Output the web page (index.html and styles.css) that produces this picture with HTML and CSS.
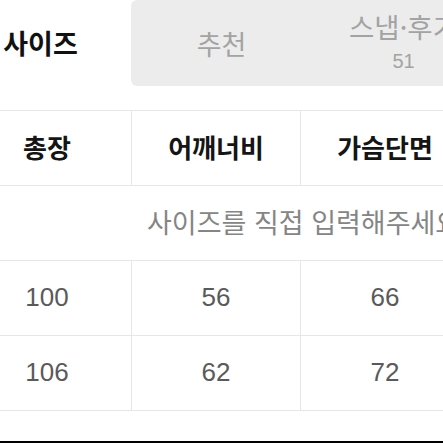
FILE: index.html
```html
<!DOCTYPE html>
<html lang="ko">
<head>
<meta charset="utf-8">
<link rel="stylesheet" href="styles.css">
</head>
<body>
<div class="page">
  <div class="tabs">
    <div class="tab tab-active">사이즈</div>
    <div class="tab-group">
      <div class="tab">추천</div>
      <div class="tab tab-stack">
        <span class="tab-label">스냅·후기</span>
        <span class="tab-count">51</span>
      </div>
    </div>
  </div>
  <div class="table">
    <div class="row row-head">
      <div class="cell">총장</div>
      <div class="cell">어깨너비</div>
      <div class="cell">가슴단면</div>
      <div class="cell">소매길이</div>
    </div>
    <div class="row row-msg">
      <div class="msg">사이즈를 직접 입력해주세요</div>
    </div>
    <div class="row">
      <div class="cell">100</div>
      <div class="cell">56</div>
      <div class="cell">66</div>
      <div class="cell">60</div>
    </div>
    <div class="row">
      <div class="cell">106</div>
      <div class="cell">62</div>
      <div class="cell">72</div>
      <div class="cell">62</div>
    </div>
  </div>
  <div class="bottom-bar"></div>
</div>
</body>
</html>
```
FILE: styles.css
```css
* { box-sizing: border-box; }
html, body {
  margin: 0;
  padding: 0;
  background: #fff;
  overflow: hidden;
}
body {
  font-family: "Noto Sans CJK KR", "Noto Sans", sans-serif;
  width: 443px;
  height: 443px;
}
.page {
  width: 443px;
  height: 443px;
  display: flex;
  flex-direction: column;
  overflow: hidden;
}
.tabs {
  display: flex;
  height: 86px;
  margin-left: -50px;
  flex-shrink: 0;
}
.tab {
  width: 181px;
  flex-shrink: 0;
  display: flex;
  align-items: center;
  justify-content: center;
  font-size: 27px;
  line-height: 1;
  color: #a3a3a3;
}
.tab-active {
  color: #111;
  font-weight: 700;
  padding-bottom: 2px;
}
.tab-group {
  display: flex;
  background: #ececec;
  border-radius: 6px;
  flex-shrink: 0;
}
.tab-stack {
  flex-direction: column;
  justify-content: flex-start;
  padding-top: 13px;
  padding-left: 2px;
  gap: 10px;
}
.tab-label {
  font-size: 27.5px;
  line-height: 1;
  white-space: nowrap;
}
.tab-count {
  font-family: "Liberation Sans", sans-serif;
  font-size: 20px;
  line-height: 1;
}
.table {
  margin-top: 24px;
  margin-left: -37px;
  border-top: 1px solid #e6e6e6;
  flex-shrink: 0;
}
.row {
  display: grid;
  grid-template-columns: repeat(4, 169px);
  height: 75px;
  border-bottom: 1px solid #e6e6e6;
}
.cell {
  display: flex;
  align-items: center;
  justify-content: center;
  border-right: 1px solid #e6e6e6;
  font-size: 26px;
  line-height: 1;
  color: #5a5a5a;
  font-family: "Liberation Sans", "Noto Sans CJK KR", sans-serif;
  padding-bottom: 2px;
}
.row-head .cell {
  font-family: "Noto Sans CJK KR", sans-serif;
  font-weight: 700;
  color: #151515;
  font-size: 26px;
}
.row-msg {
  display: flex;
  align-items: center;
}
.msg {
  padding-left: 184px;
  font-size: 27px;
  line-height: 1;
  color: #858585;
  white-space: nowrap;
  padding-bottom: 4px;
}
.bottom-bar {
  margin-top: auto;
  height: 2px;
  background: #000;
  flex-shrink: 0;
}
```
